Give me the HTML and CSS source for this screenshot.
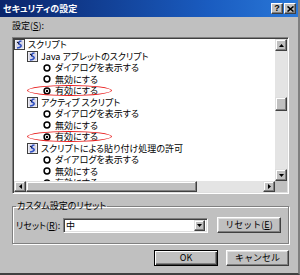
FILE: index.html
```html
<!DOCTYPE html>
<html lang="ja">
  <head>
    <meta charset="UTF-8" />
    <title>セキュリティの設定</title>
    <link rel="stylesheet" href="styles.css">
  </head>
  <body>
    <div class="dialog">
      <div class="titlebar">
        <span class="title">セキュリティの設定</span>
        <div class="tb-buttons">
          <span class="tb-btn">?</span>
          <span class="tb-btn">
            <svg width="7" height="6" viewBox="0 0 7 6"><path d="M0.5 0.5 L6.5 5.5 M6.5 0.5 L0.5 5.5" stroke="#000" stroke-width="1.6"/></svg>
          </span>
        </div>
      </div>

      <div class="body">
        <div class="field-label">設定(<u>S</u>):</div>

        <div class="listbox">
          <div class="list-main">
            <div class="tree">
              <div class="row lvl0"><svg class="ico"><use href="#script"/></svg>スクリプト</div>
              <div class="row lvl1"><svg class="ico"><use href="#script"/></svg>Java アプレットのスクリプト</div>
              <div class="row lvl2"><svg class="radio"><use href="#radio"/></svg>ダイアログを表示する</div>
              <div class="row lvl2"><svg class="radio"><use href="#radio"/></svg>無効にする</div>
              <div class="row lvl2 marked"><svg class="radio"><use href="#radio-on"/></svg>有効にする</div>
              <div class="row lvl1"><svg class="ico"><use href="#script"/></svg>アクティブ スクリプト</div>
              <div class="row lvl2"><svg class="radio"><use href="#radio"/></svg>ダイアログを表示する</div>
              <div class="row lvl2"><svg class="radio"><use href="#radio"/></svg>無効にする</div>
              <div class="row lvl2 marked"><svg class="radio"><use href="#radio-on"/></svg>有効にする</div>
              <div class="row lvl1"><svg class="ico"><use href="#script"/></svg>スクリプトによる貼り付け処理の許可</div>
              <div class="row lvl2"><svg class="radio"><use href="#radio"/></svg>ダイアログを表示する</div>
              <div class="row lvl2"><svg class="radio"><use href="#radio"/></svg>無効にする</div>
              <div class="row lvl2"><svg class="radio"><use href="#radio"/></svg>有効にする</div>
            </div>
            <div class="vscroll">
              <span class="sb-btn"><svg width="5" height="3"><path d="M2.5 0 L5 3 L0 3 Z"/></svg></span>
              <div class="v-track"><span class="v-thumb"></span></div>
              <span class="sb-btn"><svg width="5" height="3"><path d="M0 0 L5 0 L2.5 3 Z"/></svg></span>
            </div>
          </div>
          <div class="hscroll-row">
            <div class="hscroll">
              <span class="sb-btn h"><svg width="3" height="5"><path d="M3 0 L3 5 L0 2.5 Z"/></svg></span>
              <span class="h-thumb"></span>
              <div class="h-track"></div>
              <span class="sb-btn h"><svg width="3" height="5"><path d="M0 0 L3 2.5 L0 5 Z"/></svg></span>
            </div>
            <div class="corner"></div>
          </div>
        </div>

        <fieldset class="group">
          <legend>カスタム設定のリセット</legend>
          <div class="reset-row">
            <span class="reset-label">リセット(<u>R</u>):</span>
            <div class="combo">
              <span class="combo-value">中</span>
              <span class="sb-btn combo-btn"><svg width="5" height="3"><path d="M0 0 L5 0 L2.5 3 Z"/></svg></span>
            </div>
            <button class="btn reset-btn">リセット(<u>E</u>)</button>
          </div>
        </fieldset>

        <div class="actions">
          <button class="btn default">OK</button>
          <button class="btn cancel">キャンセル</button>
        </div>
      </div>
    </div>

    <svg width="0" height="0" class="defs">
      <defs>
        <symbol id="script" viewBox="0 0 11 11">
          <rect x="0.5" y="0.5" width="10" height="10" fill="#fff" stroke="#404040"/>
          <rect x="1.5" y="1.5" width="8" height="8" fill="#d8d8e8"/>
          <path d="M7.5 2 C4 2 4 5 6 5.5 C8 6 7.5 9 3 9" fill="none" stroke="#3050c0" stroke-width="1.6"/>
          <path d="M3 3 L5 4.5" stroke="#000" stroke-width="1"/>
        </symbol>
        <symbol id="radio" viewBox="0 0 8 8">
          <circle cx="4" cy="4" r="2.9" fill="#fff" stroke="#000" stroke-width="1.5"/>
        </symbol>
        <symbol id="radio-on" viewBox="0 0 8 8">
          <circle cx="4" cy="4" r="2.9" fill="#fff" stroke="#000" stroke-width="1.5"/>
          <circle cx="4" cy="4" r="1.2" fill="#000"/>
        </symbol>
      </defs>
    </svg>
  </body>
</html>
```

FILE: styles.css
```css
body {
  margin: 0;
  font-family: "Noto Sans CJK JP", "Noto Sans", sans-serif;
  font-feature-settings: "palt";
  font-size: 9px;
  color: #000;
}
.defs {
  position: absolute;
}
.dialog {
  width: 300px;
  height: 275px;
  box-sizing: border-box;
  background-color: #c0c0c0;
  border-right: 2px solid #808080;
  border-bottom: 2px solid #404040;
  overflow: hidden;
}
.titlebar {
  height: 17px;
  display: flex;
  align-items: center;
  justify-content: space-between;
  padding: 0 2px 0 3px;
  background: linear-gradient(to right, #0a246a, #1a5cc0 70%, #2a78d8);
}
.title {
  color: #fff;
  font-weight: bold;
  font-size: 9px;
  line-height: 17px;
}
.tb-buttons {
  display: flex;
  gap: 1px;
}
.tb-btn {
  width: 12px;
  height: 11px;
  box-sizing: border-box;
  display: flex;
  align-items: center;
  justify-content: center;
  background-color: #c0c0c0;
  border: 1px solid;
  border-color: #fff #404040 #404040 #fff;
  box-shadow: inset -1px -1px #808080;
  font-family: "Liberation Sans", sans-serif;
  font-weight: bold;
  font-size: 9px;
  line-height: 9px;
}
.body {
  padding: 3px 9px 0 12px;
}
.field-label {
  height: 12px;
  line-height: 12px;
  margin-bottom: 5px;
  padding-left: 0;
}
.listbox {
  height: 157px;
  box-sizing: border-box;
  border: 1px solid;
  border-color: #808080 #fff #fff #808080;
  box-shadow: inset 1px 1px #404040, inset -1px -1px #dfdfdf;
  padding: 1px;
  background-color: #fff;
  display: flex;
  flex-direction: column;
}
.list-main {
  flex: 1;
  display: flex;
  min-height: 0;
}
.tree {
  flex: 1;
  overflow: hidden;
}
.row {
  position: relative;
  height: 11.5px;
  display: flex;
  align-items: center;
  white-space: nowrap;
  line-height: 11.5px;
}
.lvl1 {
  padding-left: 13px;
}
.lvl2 {
  padding-left: 29px;
}
.ico {
  width: 11px;
  height: 11px;
  margin-right: 3px;
  flex: none;
}
.radio {
  width: 8px;
  height: 8px;
  margin-right: 4px;
  flex: none;
}
.marked::after {
  content: "";
  position: absolute;
  left: 13px;
  top: 0;
  width: 85px;
  height: 11px;
  box-sizing: border-box;
  border: 1.5px solid #e81818;
  border-radius: 50%;
}
.vscroll {
  width: 12px;
  display: flex;
  flex-direction: column;
  background-color: #e4e4e4;
}
.v-track {
  flex: 1;
}
.v-thumb {
  display: block;
  margin-top: 46px;
  height: 14px;
  box-sizing: border-box;
  background-color: #c0c0c0;
  border: 1px solid;
  border-color: #dfdfdf #404040 #404040 #dfdfdf;
  box-shadow: inset -1px -1px #808080, inset 1px 1px #fff;
}
.sb-btn {
  width: 12px;
  height: 12px;
  box-sizing: border-box;
  flex: none;
  display: flex;
  align-items: center;
  justify-content: center;
  background-color: #c0c0c0;
  border: 1px solid;
  border-color: #dfdfdf #404040 #404040 #dfdfdf;
  box-shadow: inset -1px -1px #808080, inset 1px 1px #fff;
}
.sb-btn.h {
  height: 11px;
}
.hscroll-row {
  height: 11px;
  display: flex;
}
.hscroll {
  flex: 1;
  display: flex;
  background-color: #e4e4e4;
}
.h-thumb {
  width: 171px;
  box-sizing: border-box;
  background-color: #c0c0c0;
  border: 1px solid;
  border-color: #dfdfdf #404040 #404040 #dfdfdf;
  box-shadow: inset -1px -1px #808080, inset 1px 1px #fff;
}
.h-track {
  flex: 1;
}
.corner {
  width: 12px;
  background-color: #c0c0c0;
}
.group {
  margin: 7px 0 0;
  height: 43px;
  box-sizing: border-box;
  padding: 0 3px 0 3px;
  border: 1px solid #808080;
  box-shadow: inset 1px 1px #fff, 1px 1px #fff;
}
.group legend {
  padding: 0 1px;
  line-height: 10px;
  font-size: 9px;
}
.reset-row {
  display: flex;
  align-items: center;
  margin-top: 6px;
}
.reset-label {
  width: 47px;
  flex: none;
}
.combo {
  width: 145px;
  height: 15px;
  box-sizing: border-box;
  border: 1px solid;
  border-color: #808080 #fff #fff #808080;
  box-shadow: inset 1px 1px #404040, inset -1px -1px #dfdfdf;
  padding: 2px;
  background-color: #fff;
  display: flex;
  align-items: center;
  justify-content: space-between;
}
.combo-value {
  line-height: 11px;
}
.combo-btn {
  width: 11px;
  height: 11px;
}
.btn {
  height: 16px;
  box-sizing: border-box;
  padding: 0;
  background-color: #c0c0c0;
  border: 1px solid;
  border-color: #fff #404040 #404040 #fff;
  box-shadow: inset -1px -1px #808080, inset 1px 1px #dfdfdf;
  font-family: inherit;
  font-size: 9px;
  line-height: 12px;
  color: #000;
}
.reset-btn {
  width: 64px;
  margin-left: 9px;
}
.actions {
  display: flex;
  justify-content: flex-end;
  gap: 8px;
  margin-top: 6px;
}
.btn.default {
  width: 64px;
  border: 1px solid #000;
  box-shadow: inset 1px 1px #fff, inset -1px -1px #404040, inset -2px -2px #808080;
}
.btn.cancel {
  width: 63px;
}
```
